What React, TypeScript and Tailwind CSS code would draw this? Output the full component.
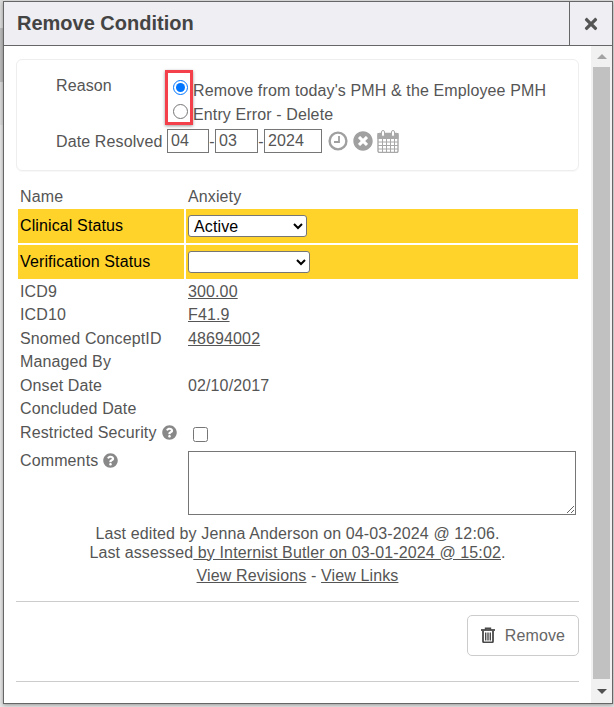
import React from "react";
import { FaTimes, FaTimesCircle, FaQuestionCircle } from "react-icons/fa";

function Row({ label, children, className = "h-[23.5px]" }: { label: React.ReactNode; children?: React.ReactNode; className?: string }) {
  return (
    <div className={`flex items-center ${className}`}>
      <div className="w-[168px] pl-[2px]">{label}</div>
      <div className="pl-[2px]">{children}</div>
    </div>
  );
}

function YellowRow({ label, selectClass, value }: { label: string; selectClass: string; value: string }) {
  return (
    <div className="flex h-[34px] gap-[2px] text-black">
      <div className="flex w-[166px] items-center bg-[#ffd32a] pb-[2px] pl-[2px]">{label}</div>
      <div className="flex flex-1 items-center bg-[#ffd32a] pl-[2px]">
        <select defaultValue={value} className={`h-[22px] rounded-[3px] border border-[#767676] bg-white pl-[1px] text-[16px] text-black ${selectClass}`}>
          <option value="Active">Active</option>
          <option value=""></option>
        </select>
      </div>
    </div>
  );
}

function Clock() {
  return (
    <svg viewBox="0 0 20 20" className="h-[20px] w-[20px]" fill="none" stroke="#a0a0a0">
      <circle cx="10" cy="10" r="8.4" strokeWidth="2.4" />
      <path d="M11 5v6H6" strokeWidth="1.8" />
    </svg>
  );
}

function Calendar() {
  return (
    <svg viewBox="0 0 22 23" className="h-[23px] w-[22px]" fill="none" stroke="#a8a8a8" strokeWidth="1">
      <rect x="1" y="3.5" width="20" height="19" rx="1.5" fill="#fff" strokeWidth="1.4" />
      <rect x="1" y="3.5" width="20" height="5" fill="#a8a8a8" />
      <path d="M5.5 9v13M9.5 9v13M13.5 9v13M17.5 9v13M1 12h20M1 15.5h20M1 19h20" />
      <rect x="4.5" y="0.5" width="3" height="6" rx="1.5" fill="#fff" />
      <rect x="14.5" y="0.5" width="3" height="6" rx="1.5" fill="#fff" />
    </svg>
  );
}

function Trash() {
  return (
    <svg viewBox="0 0 14 16" className="h-[16px] w-[14px]" fill="none" stroke="#4a4a4a">
      <path d="M0 3h14" strokeWidth="1.8" />
      <path d="M4.5 3V1.2h5V3" strokeWidth="1.4" />
      <path d="M2 3.5v10.7c0 .7.5 1.2 1.2 1.2h7.6c.7 0 1.2-.5 1.2-1.2V3.5" strokeWidth="1.8" />
      <path d="M4.7 5.5v8M7 5.5v8M9.3 5.5v8" strokeWidth="1.4" />
    </svg>
  );
}

export default function App() {
  return (
    <div className="flex h-[707px] w-[614px] overflow-hidden bg-[#e6e6e6] font-['Liberation_Sans',sans-serif] text-[16px] leading-[19px] tracking-[0.12px] text-[#555]">
      {/* page behind the dialog */}
      <div className="flex w-[3px] shrink-0 flex-col">
        <div className="h-[28px] bg-[#dcdcdc]" />
        <div className="h-[54px] bg-[#bdbdbd]" />
        <div className="h-[43px] bg-[#dcdcdc]" />
      </div>
      <div className="mt-[1px] flex h-[703px] w-[610px] shrink-0 flex-col border border-[#666] bg-white shadow-[0_1px_4px_rgba(0,0,0,0.35)]">
        {/* title bar */}
        <div className="flex h-[44px] shrink-0 border-b border-[#666] bg-[#eeeef3]">
          <div className="flex-1 pl-[13px] pt-[10px] text-[20px] font-bold leading-[23px] tracking-normal text-[#444]">Remove Condition</div>
          <div className="flex w-[43px] items-center justify-center border-l border-[#666] text-[#555]">
            <FaTimes className="h-[18px] w-[18px]" />
          </div>
        </div>

        <div className="flex min-h-0 flex-1">
          <div className="w-[587px] pl-[12px] pr-[12px]">
            {/* reason card */}
            <div className="relative mt-[13px] h-[112px] rounded-[6px] border border-[#eee] pl-[39px] pt-[16px] shadow-[0_1px_1px_rgba(0,0,0,0.03)]">
              <div className="flex">
                <div className="w-[109px]">Reason</div>
                <div className="pl-[8px]">
                  <label className="flex h-[24px] items-center">
                    <input type="radio" name="reason" defaultChecked className="m-0 h-[15px] w-[15px] -translate-y-[1px] accent-[#0075ff]" />
                    <span className="ml-[5px] translate-y-[2px]">Remove from today's PMH &amp; the Employee PMH</span>
                  </label>
                  <label className="flex h-[24px] items-center">
                    <input type="radio" name="reason" className="m-0 h-[15px] w-[15px] -translate-y-[1px]" />
                    <span className="ml-[5px] translate-y-[2px]">Entry Error - Delete</span>
                  </label>
                </div>
              </div>
              <div className="mt-[5px] flex items-center">
                <div className="w-[111px]">Date Resolved</div>
                <input defaultValue="04" className="h-[24px] w-[42px] border border-[#767676] pl-[3px] outline-none" />
                <span className="w-[6px] text-center">-</span>
                <input defaultValue="03" className="h-[24px] w-[43px] border border-[#767676] pl-[3px] outline-none" />
                <span className="w-[6px] text-center">-</span>
                <input defaultValue="2024" className="h-[24px] w-[58px] border border-[#767676] pl-[3px] outline-none" />
                <div className="ml-[6px]"><Clock /></div>
                <FaTimesCircle className="ml-[5px] h-[20px] w-[20px] text-[#a0a0a0]" />
                <div className="ml-[4px]"><Calendar /></div>
              </div>
              <div className="absolute left-[148px] top-[10px] h-[55px] w-[28px] border-[3px] border-[#f4404a] shadow-[0_1px_3px_rgba(0,0,0,0.4)]" />
            </div>

            {/* details */}
            <div className="mt-[13px] pl-[2px] pr-[1px]">
              <Row label="Name" className="h-[25px]">Anxiety</Row>
              <YellowRow label="Clinical Status" value="Active" selectClass="w-[119px]" />
              <div className="h-[2px]" />
              <YellowRow label="Verification Status" value="" selectClass="w-[122px]" />
              <div className="h-[0.5px]" />
              <Row label="ICD9"><span className="underline">300.00</span></Row>
              <Row label="ICD10"><span className="underline">F41.9</span></Row>
              <Row label="Snomed ConceptID"><span className="underline">48694002</span></Row>
              <Row label="Managed By" />
              <Row label="Onset Date">02/10/2017</Row>
              <Row label="Concluded Date" />
              <Row
                label={
                  <span className="flex items-center gap-[5px]">
                    Restricted Security <FaQuestionCircle className="h-[15px] w-[15px] text-[#888]" />
                  </span>
                }
              >
                <input type="checkbox" className="ml-[5px] mt-[4px] block h-[15px] w-[15px]" />
              </Row>
              <div className="mt-[6.7px] flex">
                <div className="flex h-[19px] w-[170px] items-center gap-[5px] pl-[2px]">
                  Comments <FaQuestionCircle className="h-[15px] w-[15px] text-[#888]" />
                </div>
                <textarea className="h-[64px] w-[388px] border border-[#767676] outline-none" />
              </div>
            </div>

            <div className="mt-[9px] text-center">
              <div>Last edited by Jenna Anderson on 04-03-2024 @ 12:06.</div>
              <div>
                Last assessed<span className="underline"> by Internist Butler on 03-01-2024 @ 15:02</span>.
              </div>
              <div className="mt-[4px]">
                <span className="underline">View Revisions</span> - <span className="underline">View Links</span>
              </div>
            </div>

            <div className="mt-[16px] border-t border-[#ccc]" />
            <div className="mt-[13px] flex justify-end">
              <button className="flex h-[41px] w-[112px] items-center justify-center gap-[10px] rounded-[5px] border border-[#ccc] text-[#666]">
                <Trash /> Remove
              </button>
            </div>
            <div className="mt-[25px] border-t border-[#ccc]" />
          </div>

          {/* scrollbar */}
          <div className="flex w-[21px] flex-col items-center bg-[#f1f1f1]">
            <div className="flex h-[21px] items-center justify-center">
              <div className="h-0 w-0 border-x-[5px] border-b-[5px] border-x-transparent border-b-[#a3a3a3]" />
            </div>
            <div className="min-h-0 w-[17px] flex-1 bg-[#c1c1c1]" />
            <div className="flex h-[24px] items-center justify-center">
              <div className="h-0 w-0 border-x-[5px] border-t-[5px] border-x-transparent border-t-[#505050]" />
            </div>
          </div>
        </div>
      </div>
    </div>
  );
}
